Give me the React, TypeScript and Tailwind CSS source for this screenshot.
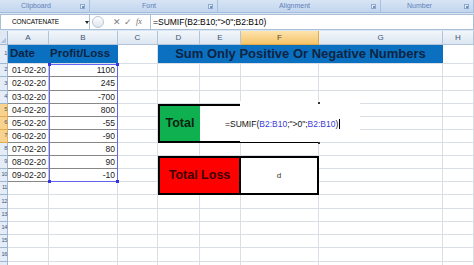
import React from 'react';

const cols = ['A', 'B', 'C', 'D', 'E', 'F', 'G', 'H'];

const data: [string, string][] = [
  ['01-02-20', '1100'],
  ['02-02-20', '245'],
  ['03-02-20', '-700'],
  ['04-02-20', '800'],
  ['05-02-20', '-55'],
  ['06-02-20', '-90'],
  ['07-02-20', '80'],
  ['08-02-20', '90'],
  ['09-02-20', '-10'],
];

function covered(r: number, c: string) {
  if (r === 1 && 'DEFG'.includes(c)) return true;
  if (r >= 5 && r <= 7 && 'DEF'.includes(c)) return true;
  if (r >= 9 && r <= 11 && 'DEF'.includes(c)) return true;
  return false;
}

function Launcher() {
  return (
    <span className="w-[5px] h-[5px] border border-[#8ea9cf] bg-[#e6eef9] flex items-end justify-end">
      <span className="w-[2px] h-[2px] bg-[#6f8fbd]" />
    </span>
  );
}

function Group({ label, w, pr }: { label: string; w: string; pr: string }) {
  return (
    <div className={`${w} h-full flex items-center border-r border-[#a9c0de]`}>
      <span className={`flex-1 text-center text-[7px] text-[#5f82b8] ${pr}`}>{label}</span>
      <span className="mr-[4px]">
        <Launcher />
      </span>
    </div>
  );
}

function Cell({ r, c }: { r: number; c: string }) {
  const base = 'border-r border-b border-[#dadfe7] min-w-0';
  if (r === 1 && c === 'A') {
    return (
      <div className="bg-[#0b70c0] flex items-center pl-[2px] border-b border-[#dadfe7]">
        <span className="text-[11.5px] font-bold text-[#0d2444] whitespace-nowrap">Date</span>
      </div>
    );
  }
  if (r === 1 && c === 'B') {
    return (
      <div className="bg-[#0b70c0] flex items-center pl-[1px] border-b border-[#dadfe7]">
        <span className="text-[11.5px] font-bold text-[#0d2444] whitespace-nowrap">Profit/Loss</span>
      </div>
    );
  }
  if (r >= 2 && r <= 10 && (c === 'A' || c === 'B')) {
    const d = data[r - 2];
    return (
      <div className="border-b border-r border-b-[#878787] border-r-[#bfc4cb] flex items-center justify-end pr-[2px]">
        <span className="text-[8.5px] text-[#1b1b1b] leading-none">{c === 'A' ? d[0] : d[1]}</span>
      </div>
    );
  }
  return <div className={base} />;
}

export default function App() {
  const rowNums = Array.from({ length: 17 }, (_, i) => i + 1);
  return (
    <div className="relative w-[474px] h-[265px] overflow-hidden bg-white font-['Liberation_Sans',Arial,sans-serif]">
      {/* Ribbon group labels */}
      <div className="h-[13px] flex bg-gradient-to-b from-[#d7e4f4] to-[#c3d6ef] border-b border-[#a3bcdc]">
        <Group label="Clipboard" w="w-[90px]" pr="pr-[8px]" />
        <Group label="Font" w="w-[128px]" pr="pr-[0px]" />
        <Group label="Alignment" w="w-[163px]" pr="pr-[0px]" />
        <Group label="Number" w="w-[93px]" pr="pr-[6px]" />
      </div>

      {/* Formula bar */}
      <div className="h-[18px] flex items-center bg-[#dbe6f4]">
        <div className="w-[90px] h-[16px] bg-white border border-[#a9bfd6] flex items-center relative">
          <span className="pl-[11px] text-[6.5px] text-black tracking-[-0.1px]">CONCATENATE</span>
          <span className="absolute left-[84px] top-[6px] w-0 h-0 border-l-[2.5px] border-r-[2.5px] border-t-[3px] border-l-transparent border-r-transparent border-t-[#222]" />
        </div>
        <div className="w-[60px] h-[16px] flex items-center bg-white border-y border-[#a9bfd6]">
          <span className="ml-[2px] w-[12px] h-[12px] rounded-full border border-[#b9c6d6] bg-gradient-to-b from-[#ffffff] to-[#dde5ef]" />
          <span className="ml-[9px] text-[9px] text-[#7b7b7b] leading-none">✕</span>
          <span className="ml-[3px] text-[9px] text-[#7b7b7b] leading-none">✓</span>
          <span className="ml-[4px] text-[8px] italic text-[#6d6d6d] font-['Liberation_Serif',serif] leading-none">fx</span>
        </div>
        <div className="flex-1 h-[16px] bg-white border border-[#a9bfd6] flex items-center pl-[2px]">
          <span className="text-[8.5px] text-black leading-none whitespace-nowrap">=SUMIF(B2:B10;"&gt;0";B2:B10)</span>
        </div>
      </div>

      {/* Sheet grid */}
      <div className="grid grid-cols-[8px_41px_69px_40px_42px_41px_78px_124px_31px] grid-rows-[14px_19px_13px_14px_13px_13px_13px_13px_13px_13px_13px_13px_14px_13px_13px_13px_14px_13px]">
        {/* Explicit merged cells */}
        <div className="col-start-5 col-span-4 row-start-2 bg-[#0b70c0] flex items-center justify-center border-b border-[#dadfe7]">
          <span className="text-[13px] font-bold text-[#0d2444] whitespace-nowrap">Sum Only Positive Or Negative Numbers</span>
        </div>
        <div className="col-start-5 row-start-6 row-span-3 bg-[#0fb04f] border-l-2 border-t-2 border-b-2 border-black flex items-center justify-center">
          <span className="text-[12.5px] font-bold text-[#0b2412]">Total</span>
        </div>
        <div className="col-start-6 col-span-2 row-start-6 row-span-3 bg-white border-t-2 border-b-2 border-r-2 border-black" />
        <div className="col-start-5 col-span-2 row-start-10 row-span-3 bg-[#ff0000] border-2 border-black flex items-center justify-center">
          <span className="text-[12.5px] font-bold text-[#3d0000]">Total Loss</span>
        </div>
        <div className="col-start-7 row-start-10 row-span-3 bg-white border-t-2 border-b-2 border-r-2 border-black flex items-center justify-center">
          <span className="text-[8px] text-[#333]">d</span>
        </div>

        {/* Column header row */}
        <div className="bg-[#dfe8f3] border-r border-b border-[#9eb6ce] relative">
          <span className="absolute right-[1px] bottom-[1px] w-[5px] h-[5px] bg-[linear-gradient(135deg,transparent_50%,#b4c6dd_50%)]" />
        </div>
        {cols.map((c) =>
          c === 'F' ? (
            <div key={c} className="bg-gradient-to-b from-[#fde3ac] to-[#f5c468] border-r border-b border-[#e0a94a] flex items-center justify-center">
              <span className="text-[8px] text-[#5a4a30]">{c}</span>
            </div>
          ) : (
            <div key={c} className="bg-gradient-to-b from-[#f2f6fb] to-[#dde6f1] border-r border-b border-[#b2c4da] flex items-center justify-center">
              <span className="text-[8px] text-[#3f5573]">{c}</span>
            </div>
          )
        )}

        {/* Sheet rows */}
        {rowNums.map((r) => (
          <React.Fragment key={r}>
            <div
              className={
                r >= 5 && r <= 7
                  ? 'bg-[#f8d38f] border-r border-b border-[#e3ad55] flex items-center justify-end'
                  : 'bg-[#e4ecf7] border-r border-b border-[#9eb6ce] flex items-center justify-end'
              }
            >
              {r <= 16 && (
                <span className="text-[5.5px] text-[#3f5573] leading-none tracking-[-0.3px] whitespace-nowrap">{r}</span>
              )}
            </div>
            {cols.filter((c) => !covered(r, c)).map((c) => (
              <Cell key={c} r={r} c={c} />
            ))}
          </React.Fragment>
        ))}
      </div>

      {/* Range highlight B2:B10 */}
      <div className="absolute left-[49px] top-[64px] w-[69px] h-[118px] border border-[#6464f2] pointer-events-none" />
      <span className="absolute left-[48px] top-[63px] w-[3px] h-[3px] bg-[#3434e0]" />
      <span className="absolute left-[116px] top-[63px] w-[3px] h-[3px] bg-[#3434e0]" />
      <span className="absolute left-[48px] top-[180px] w-[3px] h-[3px] bg-[#3434e0]" />
      <span className="absolute left-[116px] top-[180px] w-[3px] h-[3px] bg-[#3434e0]" />

      {/* In-cell edit box */}
      <div className="absolute left-[240px] top-[101px] w-[120px] h-[41px] bg-white" />
      <span className="absolute left-[318px] top-[102px] w-[2px] h-[2px] bg-[#333]" />
      <span className="absolute left-[318px] top-[142px] w-[2px] h-[2px] bg-[#333]" />
      <div className="absolute left-[225px] top-[119px] flex items-center whitespace-nowrap text-[8.5px] leading-none">
        <span className="text-[#111]">=SUMIF(</span>
        <span className="text-[#3b3bd6]">B2:B10</span>
        <span className="text-[#111]">;"&gt;0";</span>
        <span className="text-[#3b3bd6]">B2:B10</span>
        <span className="text-[#111]">)</span>
        <span className="ml-[1px] w-[1px] h-[10px] bg-black" />
      </div>
    </div>
  );
}
